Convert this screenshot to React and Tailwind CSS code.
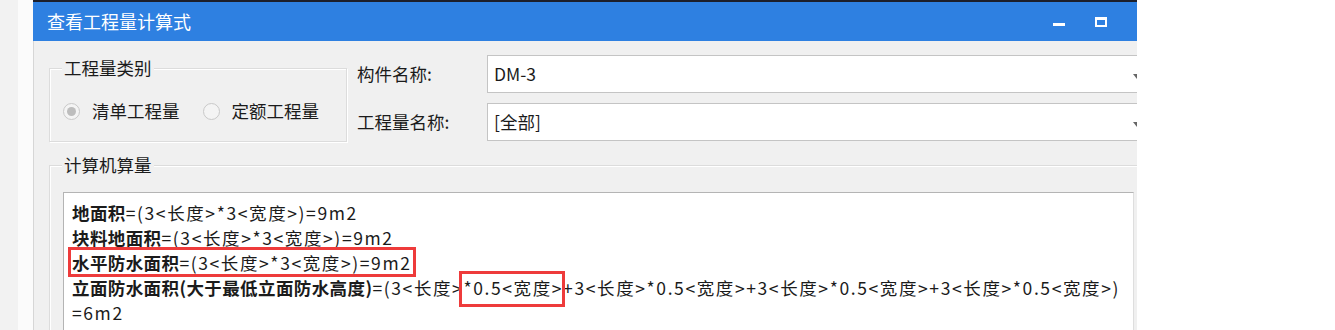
import React from "react";

const font = { fontFamily: '"Noto Sans CJK SC", "Microsoft YaHei", sans-serif' };

const Radio = ({ checked, label }) => (
  <label className="flex items-center gap-[12px]">
    <span className="w-[17px] h-[17px] rounded-full border border-[#c9c9c9] bg-[#f4f4f4] flex items-center justify-center">
      {checked && <span className="w-[9px] h-[9px] rounded-full bg-[#bdbdbd]" />}
    </span>
    <span>{label}</span>
  </label>
);

const Combo = ({ value }) => (
  <div className="relative flex-1 h-[38px] bg-white border-y border-l border-[#c4c4c4] flex items-center pl-[6px]">
    <span>{value}</span>
    <span className="absolute right-[-4px] top-[18px] w-0 h-0 border-l-[4px] border-r-[4px] border-t-[5px] border-l-transparent border-r-transparent border-t-[#666]" />
  </div>
);

// one formula, bold name + plain expression
const Line = ({ name, expr }) => (
  <div className="whitespace-nowrap">
    <span className="font-bold tracking-[0.4px]">{name}</span>
    <span className="tracking-[1.6px]">{expr}</span>
  </div>
);

export default function App() {
  return (
    <div className="w-[1335px] h-[330px] flex bg-white overflow-hidden text-[#1b1b1b]" style={font}>
      {/* desktop behind */}
      <div className="w-[18px] bg-[#f2f2f2]" />
      <div className="w-[15px] bg-[#fbfbfb]" />

      {/* dialog */}
      <div className="w-[1104px] flex flex-col border-t-2 border-[#1c1f2b] overflow-hidden">
        <div className="h-[39px] shrink-0 bg-[#2e80e1] flex items-center pl-[14px] pr-[30px] text-white text-[18px]">
          <span className="flex-1">查看工程量计算式</span>
          <span className="w-[12px] h-[3px] bg-white mt-[6px] mr-[30px]" />
          <span className="w-[12px] h-[10px] border-2 border-white border-t-[3px]" />
        </div>

        <div className="flex-1 bg-[#f0f0f0] border-l border-[#d6d6d6] pl-[15px] text-[17.5px]">
          {/* top row */}
          <div className="flex pt-[14px] h-[100px]">
            <div className="relative mt-[13px] w-[298px] h-[74px] border border-[#dcdcdc] shadow-[inset_1px_1px_0_#fff,1px_1px_0_#fff]">
              <span className="absolute left-[12px] top-[-14px] px-[2px] bg-[#f0f0f0] leading-[26px]">工程量类别</span>
              <div className="flex items-center gap-[23px] pl-[13px] pt-[29px] leading-[26px]">
                <Radio checked label="清单工程量" />
                <Radio label="定额工程量" />
              </div>
            </div>
            <div className="flex-1 flex flex-col gap-[10px] pl-[10px]">
              <div className="flex items-center">
                <span className="w-[130px]">构件名称:</span>
                <Combo value="DM-3" />
              </div>
              <div className="flex items-center">
                <span className="w-[130px]">工程量名称:</span>
                <Combo value="[全部]" />
              </div>
            </div>
          </div>

          {/* computed quantity group */}
          <div className="relative mt-[24px] h-[200px] border-t border-l border-[#dcdcdc] shadow-[inset_1px_1px_0_#fff] pl-[13px] pt-[26px]">
            <span className="absolute left-[12px] top-[-14px] px-[2px] bg-[#f0f0f0] leading-[26px]">计算机算量</span>
            <div className="w-[1071px] h-[200px] bg-white border-t border-l border-r border-[#b4b4b4] border-r-[#dedede] pl-[8px] pt-[7px] leading-[25px]">
              <Line name="地面积" expr="=(3<长度>*3<宽度>)=9m2" />
              <Line name="块料地面积" expr="=(3<长度>*3<宽度>)=9m2" />
              <div className="whitespace-nowrap">
                <span className="relative">
                  <span className="font-bold tracking-[0.4px]">水平防水面积</span>
                  <span className="tracking-[1.6px]">=(3&lt;长度&gt;*3&lt;宽度&gt;)=9m2</span>
                  <span className="absolute left-[-4px] right-[-4px] top-[-3px] bottom-[-2px] border-[3px] border-[#ee3b3b]" />
                </span>
              </div>
              <div className="whitespace-nowrap tracking-[1.6px]">
                <span className="font-bold tracking-[0.4px]">立面防水面积(大于最低立面防水高度)</span>
                <span>=(3&lt;长度&gt;</span>
                <span className="relative">
                  *0.5&lt;宽度&gt;
                  <span className="absolute left-[-4px] right-[-2px] top-[-4px] bottom-[-7px] border-[3px] border-[#ee3b3b]" />
                </span>
                <span>+3&lt;长度&gt;*0.5&lt;宽度&gt;+3&lt;长度&gt;*0.5&lt;宽度&gt;+3&lt;长度&gt;*0.5&lt;宽度&gt;)</span>
              </div>
              <div className="tracking-[1.6px]">=6m2</div>
            </div>
          </div>
        </div>
      </div>

      <div className="flex-1 bg-white" />
    </div>
  );
}
